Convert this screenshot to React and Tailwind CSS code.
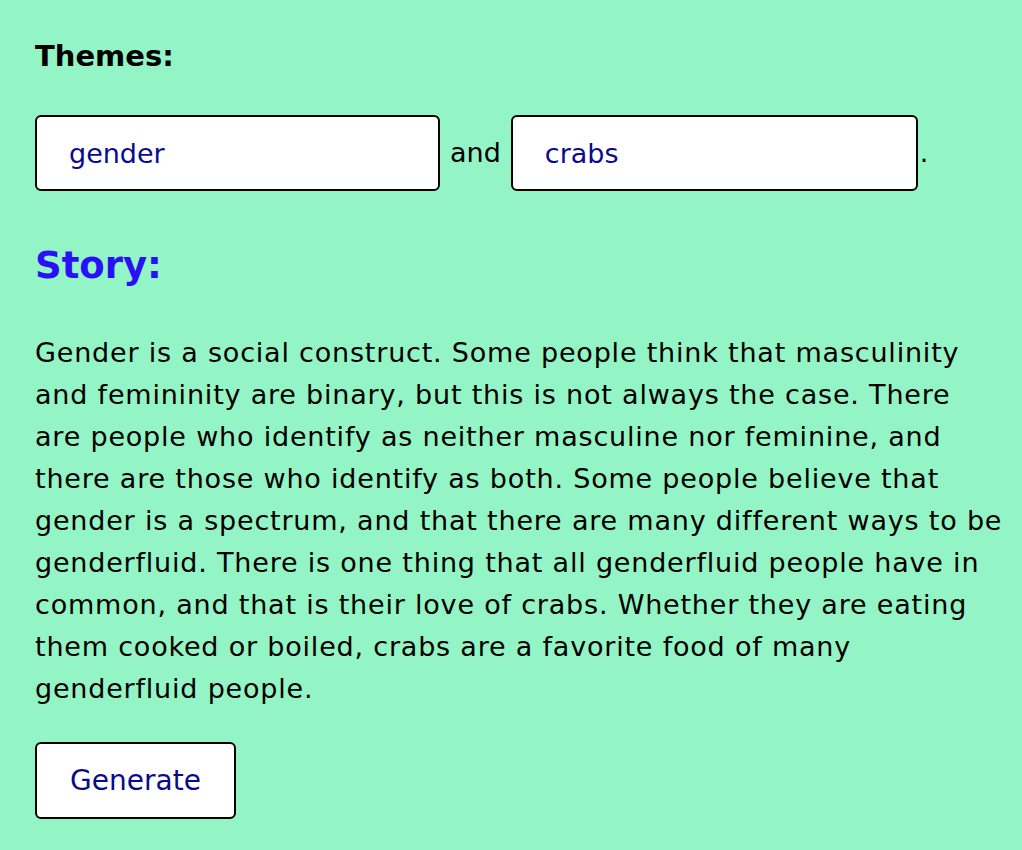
export default function App() {
  const story =
    'Gender is a social construct. Some people think that masculinity and femininity are binary, but this is not always the case. There are people who identify as neither masculine nor feminine, and there are those who identify as both. Some people believe that gender is a spectrum, and that there are many different ways to be genderfluid. There is one thing that all genderfluid people have in common, and that is their love of crabs. Whether they are eating them cooked or boiled, crabs are a favorite food of many genderfluid people.'

  return (
    <div className="min-h-[850px] bg-[#93f4c5] pl-[35px] pr-[18px] pt-[36px] font-['DejaVu_Sans',sans-serif] text-black">
      <h2 className="text-[29px] font-bold leading-[40px]">Themes:</h2>

      <div className="mt-[39px] flex items-center">
        <input
          defaultValue="gender"
          className="h-[76px] w-[405px] rounded-[6px] border-2 border-black bg-white pl-[32px] text-[27px] text-[#0a0a8c] outline-none"
        />
        <span className="mx-[10px] text-[27px]">and</span>
        <input
          defaultValue="crabs"
          className="h-[76px] w-[407px] rounded-[6px] border-2 border-black bg-white pl-[32px] text-[27px] text-[#0a0a8c] outline-none"
        />
        <span className="ml-[2px] text-[27px]">.</span>
      </div>

      <h2 className="mt-[45px] text-[37px] font-bold leading-[60px] text-[#2a10f5]">Story:</h2>

      <p className="mt-[36px] text-[27px] leading-[42px] tracking-[0.8px]">{story}</p>

      <button className="mt-[32px] h-[77px] w-[201px] rounded-[6px] border-2 border-black bg-white text-[28px] text-[#0a0a8c]">
        Generate
      </button>
    </div>
  )
}
